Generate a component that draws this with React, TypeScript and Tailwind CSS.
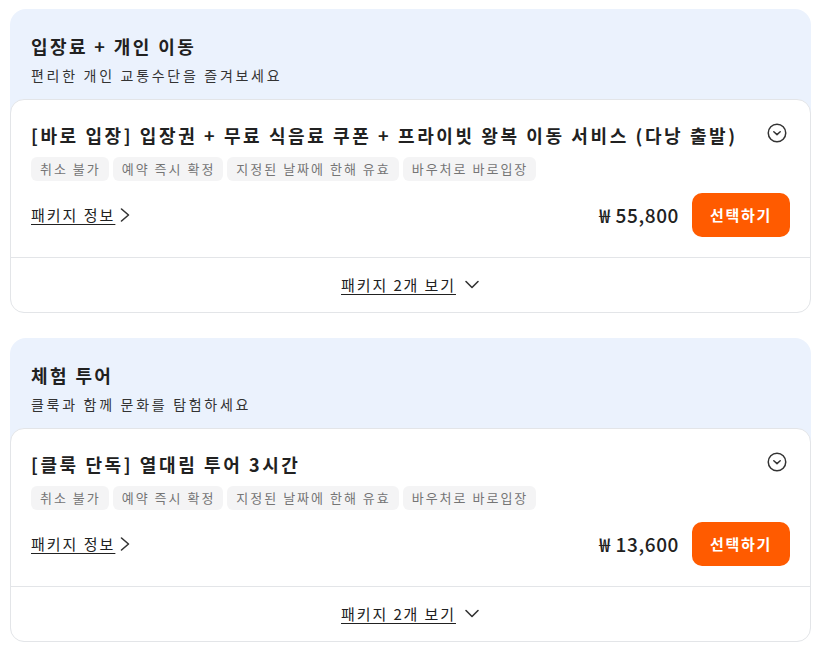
import React from "react";

const font = { fontFamily: '"Noto Sans CJK KR", "Noto Sans", sans-serif' };

function CircleDown() {
  return (
    <svg width="20" height="20" viewBox="0 0 20 20" fill="none" stroke="#333" strokeWidth="1.5" strokeLinecap="round" strokeLinejoin="round">
      <circle cx="10" cy="10" r="8.75" />
      <path d="M6.8 8.8L10 11.6l3.2-2.8" />
    </svg>
  );
}

function ChevronRight() {
  return (
    <svg width="12" height="16" viewBox="0 0 12 16" fill="none" stroke="#333" strokeWidth="1.6" strokeLinecap="round" strokeLinejoin="round">
      <path d="M2.5 2l7 6-7 6" />
    </svg>
  );
}

function ChevronDown() {
  return (
    <svg width="16" height="14" viewBox="0 0 16 14" fill="none" stroke="#333" strokeWidth="1.6" strokeLinecap="round" strokeLinejoin="round">
      <path d="M2 3.5l6 6 6-6" />
    </svg>
  );
}

type Section = {
  title: string;
  subtitle: string;
  pkg: string;
  price: string;
};

const sections: Section[] = [
  {
    title: "입장료 + 개인 이동",
    subtitle: "편리한 개인 교통수단을 즐겨보세요",
    pkg: "[바로 입장] 입장권 + 무료 식음료 쿠폰 + 프라이빗 왕복 이동 서비스 (다낭 출발)",
    price: "₩ 55,800",
  },
  {
    title: "체험 투어",
    subtitle: "클룩과 함께 문화를 탐험하세요",
    pkg: "[클룩 단독] 열대림 투어 3시간",
    price: "₩ 13,600",
  },
];

const chips = ["취소 불가", "예약 즉시 확정", "지정된 날짜에 한해 유효", "바우처로 바로입장"];

export default function App() {
  return (
    <div className="min-h-[650px] bg-white px-[10px] pt-[9px]" style={font}>
      <div className="flex flex-col gap-[25px]">
        {sections.map((s) => (
          <div key={s.title} className="rounded-[16px] bg-[#ebf2fd]">
            <div className="px-[21px] pt-[23px] pb-[14px]">
              <div className="text-[18px] leading-[28px] font-bold tracking-[2.4px] text-[#212121]">{s.title}</div>
              <div className="mt-[5px] text-[14px] leading-[20px] tracking-[2.7px] text-[#333]">{s.subtitle}</div>
            </div>
            <div className="rounded-[14px] border border-[#e3e5e8] bg-white">
              <div className="px-[20px] pt-[21px] pb-[20px]">
                <div className="flex items-start justify-between gap-4">
                  <div className="text-[18px] leading-[28px] font-bold tracking-[2.6px] text-[#212121]">{s.pkg}</div>
                  <div className="mr-[3px] mt-[2px] shrink-0">
                    <CircleDown />
                  </div>
                </div>
                <div className="mt-[8px] flex flex-wrap gap-[4px]">
                  {chips.map((c) => (
                    <span key={c} className="rounded-[6px] bg-[#f4f4f5] pl-[9px] pr-[8px] text-[13px] leading-[24px] tracking-[2px] text-[#757575]">
                      {c}
                    </span>
                  ))}
                </div>
                <div className="mt-[12px] flex items-center justify-between">
                  <div className="flex items-center gap-[4px] text-[15px] tracking-[2px] text-[#212121]">
                    <span className="underline underline-offset-[3px]">패키지 정보</span>
                    <ChevronRight />
                  </div>
                  <div className="flex items-center gap-[13px]">
                    <span className="text-[19px] font-medium tracking-[0.6px] text-[#212121]">{s.price}</span>
                    <button className="h-[44px] w-[98px] rounded-[10px] bg-[#ff5b00] text-[15px] font-bold tracking-[1.7px] text-white">
                      선택하기
                    </button>
                  </div>
                </div>
              </div>
              <div className="flex h-[55px] items-center justify-center gap-[8px] border-t border-[#e3e5e8] text-[15px] text-[#212121]">
                <span className="underline underline-offset-[3px] tracking-[1.9px]">패키지 2개 보기</span>
                <ChevronDown />
              </div>
            </div>
          </div>
        ))}
      </div>
    </div>
  );
}
